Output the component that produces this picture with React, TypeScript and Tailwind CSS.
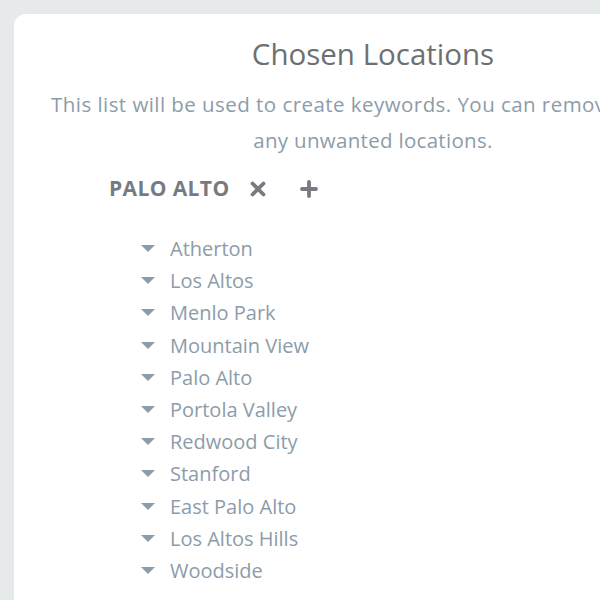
const places = [
  "Atherton",
  "Los Altos",
  "Menlo Park",
  "Mountain View",
  "Palo Alto",
  "Portola Valley",
  "Redwood City",
  "Stanford",
  "East Palo Alto",
  "Los Altos Hills",
  "Woodside",
];

export default function App() {
  return (
    <div
      className="w-[600px] h-[600px] overflow-hidden bg-[#e7eaeb] pt-[14px] pl-[14px]"
      style={{ fontFamily: '"Open Sans", "Noto Sans", sans-serif' }}
    >
      <div className="w-[718px] h-[640px] bg-white rounded-[12px] px-[36px] pt-[20px]">
        <h2 className="text-center text-[29.5px] leading-[40px] text-[#6d6f71]">
          Chosen Locations
        </h2>
        <div className="mt-[12px] text-[20.5px] leading-[36px] text-[#8c9caa] tracking-[0.3px]">
          {/* first line runs past the right edge of the window */}
          <p className="pl-[1px] whitespace-nowrap tracking-[0.45px]">
            This list will be used to create keywords. You can remove
          </p>
          <p className="text-center">any unwanted locations.</p>
        </div>

        <div className="mt-[16px] ml-[59px] flex items-center h-[30px]">
          <span className="font-bold text-[21px] text-[#767b81] tracking-[0.4px]">PALO ALTO</span>
          <svg className="ml-[20px]" width="16" height="16" viewBox="0 0 16 16">
            <path d="M2.5 2.5 L13.5 13.5 M13.5 2.5 L2.5 13.5" stroke="#777b80" strokeWidth="3.8" strokeLinecap="round" />
          </svg>
          <svg className="ml-[34px]" width="18" height="18" viewBox="0 0 18 18">
            <path d="M9 2 V16 M2 9 H16" stroke="#777b80" strokeWidth="3.8" strokeLinecap="round" />
          </svg>
        </div>

        <ul className="mt-[29px] ml-[91px]">
          {places.map((p) => (
            <li key={p} className="flex items-center h-[32.2px]">
              <svg width="14" height="8" viewBox="0 0 14 8">
                <path d="M0 0 H14 L7 7 Z" fill="#8c9caa" />
              </svg>
              <span className="ml-[15px] text-[20px] text-[#8c9caa]">{p}</span>
            </li>
          ))}
        </ul>
      </div>
    </div>
  );
}
